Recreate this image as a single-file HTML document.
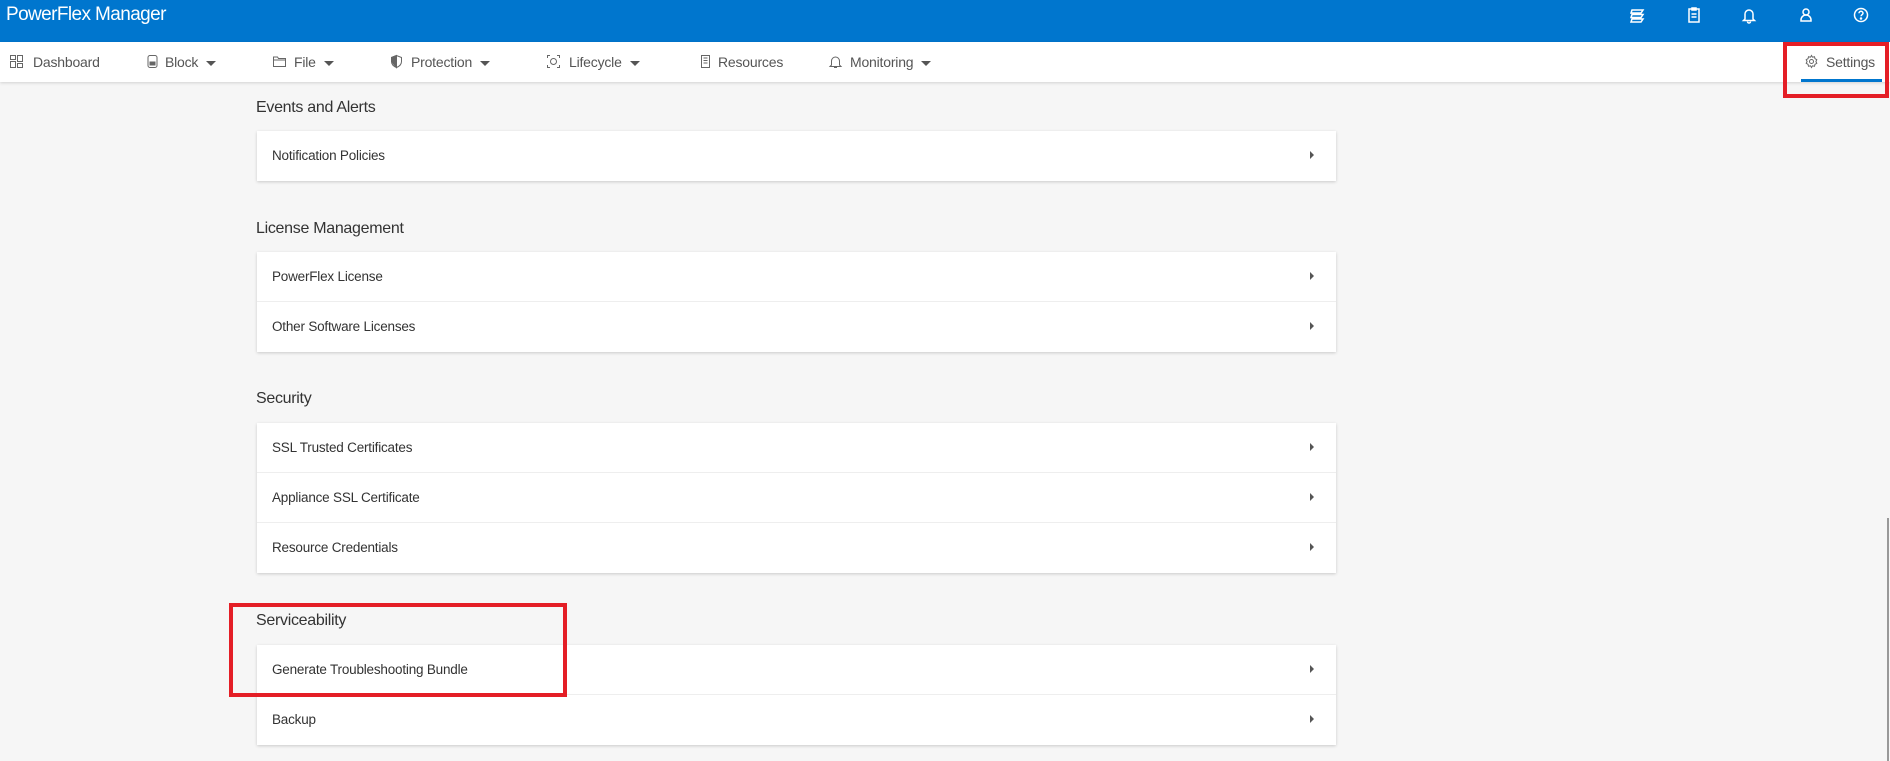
<!DOCTYPE html>
<html><head><meta charset="utf-8"><style>
*{margin:0;padding:0;box-sizing:border-box}
body{width:1890px;height:761px;overflow:hidden;background:#f6f6f6;font-family:"Liberation Sans",sans-serif;position:relative;color:#333}
.hdr{position:absolute;left:0;top:0;width:1890px;height:42px;background:#0076ce}
.title{position:absolute;left:6px;top:4px;color:#fff;font-size:19px;letter-spacing:-0.6px}
.hi{position:absolute;top:6px;width:18px;height:18px}
.nav{position:absolute;left:0;top:42px;width:1890px;height:40px;background:#fff;box-shadow:0 1px 3px rgba(0,0,0,.15)}
.ni{position:absolute;top:12px;font-size:14px;color:#555;white-space:nowrap;letter-spacing:-0.2px}
.ic{position:absolute;top:12px;width:15px;height:15px}
.car{display:inline-block;width:0;height:0;border-left:5px solid transparent;border-right:5px solid transparent;border-top:5px solid #555;margin-left:8px;vertical-align:middle}
.sec{position:absolute;left:256px;font-size:16px;color:#333;letter-spacing:-0.3px}
.card{position:absolute;left:257px;width:1079px;background:#fff;box-shadow:0 1px 3px rgba(0,0,0,.18)}
.row{height:50px;border-bottom:1px solid #eee;position:relative;font-size:13.5px;color:#333;padding-left:15px;line-height:49px;letter-spacing:-0.2px}
.row:last-child{border-bottom:none}
.row:after{content:"";position:absolute;left:1053px;top:20px;border-top:4px solid transparent;border-bottom:4px solid transparent;border-left:4px solid #555}
.red{position:absolute;border:4px solid #e41e26}
</style></head><body>
<div class="hdr">
<div class="title">PowerFlex Manager</div>
<svg class="hi" style="left:1628px" viewBox="0 0 18 18" fill="none" stroke="#fff" stroke-width="1.5"><path d="M4 4h11l-2 3H3zM4 8.5h11l-2 3H3zM4 13h11l-2 3H3z"/></svg>
<svg class="hi" style="left:1685px" viewBox="0 0 18 18" fill="none" stroke="#fff" stroke-width="1.5"><rect x="4" y="3" width="10" height="13"/><path d="M7 2h4v2H7zM6.5 8h5M6.5 11h5"/></svg>
<svg class="hi" style="left:1740px" viewBox="0 0 18 18" fill="none" stroke="#fff" stroke-width="1.5"><path d="M5 13V8a4 4 0 018 0v5l1.5 1.5h-11zM7.5 15.5a1.5 1.5 0 003 0"/></svg>
<svg class="hi" style="left:1797px" viewBox="0 0 18 18" fill="none" stroke="#fff" stroke-width="1.5"><circle cx="9" cy="6" r="3"/><path d="M4 15v-1a5 5 0 0110 0v1z"/></svg>
<svg class="hi" style="left:1852px" viewBox="0 0 18 18" fill="none" stroke="#fff" stroke-width="1.5"><circle cx="9" cy="9" r="6.5"/><path d="M7 7.3a2 2 0 114 0c0 1.3-2 1.5-2 3"/><circle cx="9" cy="12.5" r=".5" fill="#fff"/></svg>
</div>
<div class="nav">
<svg class="ic" style="left:9px" viewBox="0 0 15 15" fill="none" stroke="#666"><rect x="1.5" y="1.5" width="5" height="4"/><rect x="8.5" y="1.5" width="5" height="6"/><rect x="1.5" y="7.5" width="5" height="6"/><rect x="8.5" y="9.5" width="5" height="4"/></svg>
<div class="ni" style="left:33px">Dashboard</div>
<svg class="ic" style="left:145px" viewBox="0 0 15 15" fill="none" stroke="#666"><rect x="3" y="1.5" width="9" height="12" rx="2"/><rect x="5" y="8" width="5" height="3" fill="#666"/></svg>
<div class="ni" style="left:165px">Block<span class="car"></span></div>
<svg class="ic" style="left:272px" viewBox="0 0 15 15" fill="none" stroke="#666"><path d="M1.5 3h4l1 1.5h7v8h-12zM1.5 6h12"/></svg>
<div class="ni" style="left:294px">File<span class="car"></span></div>
<svg class="ic" style="left:389px" viewBox="0 0 15 15" fill="none" stroke="#666"><path d="M7.5 1.5L2.5 3.5v4c0 3 2.5 5 5 6 2.5-1 5-3 5-6v-4z"/><path d="M7.5 1.5v12L2.5 7.5v-4z" fill="#666"/></svg>
<div class="ni" style="left:411px">Protection<span class="car"></span></div>
<svg class="ic" style="left:546px" viewBox="0 0 15 15" fill="none" stroke="#666"><path d="M1.5 4V1.5H4M11 1.5h2.5V4M13.5 11v2.5H11M4 13.5H1.5V11"/><circle cx="7.5" cy="7.5" r="3"/></svg>
<div class="ni" style="left:569px">Lifecycle<span class="car"></span></div>
<svg class="ic" style="left:698px" viewBox="0 0 15 15" fill="none" stroke="#666"><rect x="3.5" y="1.5" width="8" height="12"/><path d="M5.5 4h4M5.5 6.5h4M5.5 9h4"/></svg>
<div class="ni" style="left:718px">Resources</div>
<svg class="ic" style="left:828px" viewBox="0 0 15 15" fill="none" stroke="#666"><path d="M3.5 11V7a4 4 0 018 0v4l1.5 1.5H2zM6 13.5h3"/></svg>
<div class="ni" style="left:850px">Monitoring<span class="car"></span></div>
<svg class="ic" style="left:1804px" viewBox="0 0 15 15" fill="none" stroke="#666"><circle cx="7.5" cy="7.5" r="2"/><path d="M7.5 1.5l1 1.7 2-.5.5 2 1.8 1-.9 1.8.9 1.8-1.8 1-.5 2-2-.5-1 1.7-1-1.7-2 .5-.5-2-1.8-1 .9-1.8-.9-1.8 1.8-1 .5-2 2 .5z"/></svg>
<div class="ni" style="left:1826px">Settings</div>
<div style="position:absolute;left:1801px;top:37px;width:81px;height:3px;background:#0076ce"></div>
</div>
<div class="red" style="left:1783px;top:42px;width:106px;height:56px"></div>

<div class="sec" style="top:99px">Events and Alerts</div>
<div class="card" style="top:131px"><div class="row">Notification Policies</div></div>
<div class="sec" style="top:220px">License Management</div>
<div class="card" style="top:252px"><div class="row">PowerFlex License</div><div class="row">Other Software Licenses</div></div>
<div class="sec" style="top:390px">Security</div>
<div class="card" style="top:423px"><div class="row">SSL Trusted Certificates</div><div class="row">Appliance SSL Certificate</div><div class="row">Resource Credentials</div></div>
<div class="sec" style="top:612px">Serviceability</div>
<div class="card" style="top:645px"><div class="row">Generate Troubleshooting Bundle</div><div class="row">Backup</div></div>
<div class="red" style="left:229px;top:603px;width:338px;height:94px"></div>
<div style="position:absolute;left:1887px;top:518px;width:2px;height:243px;background:#999"></div>
</body></html>
